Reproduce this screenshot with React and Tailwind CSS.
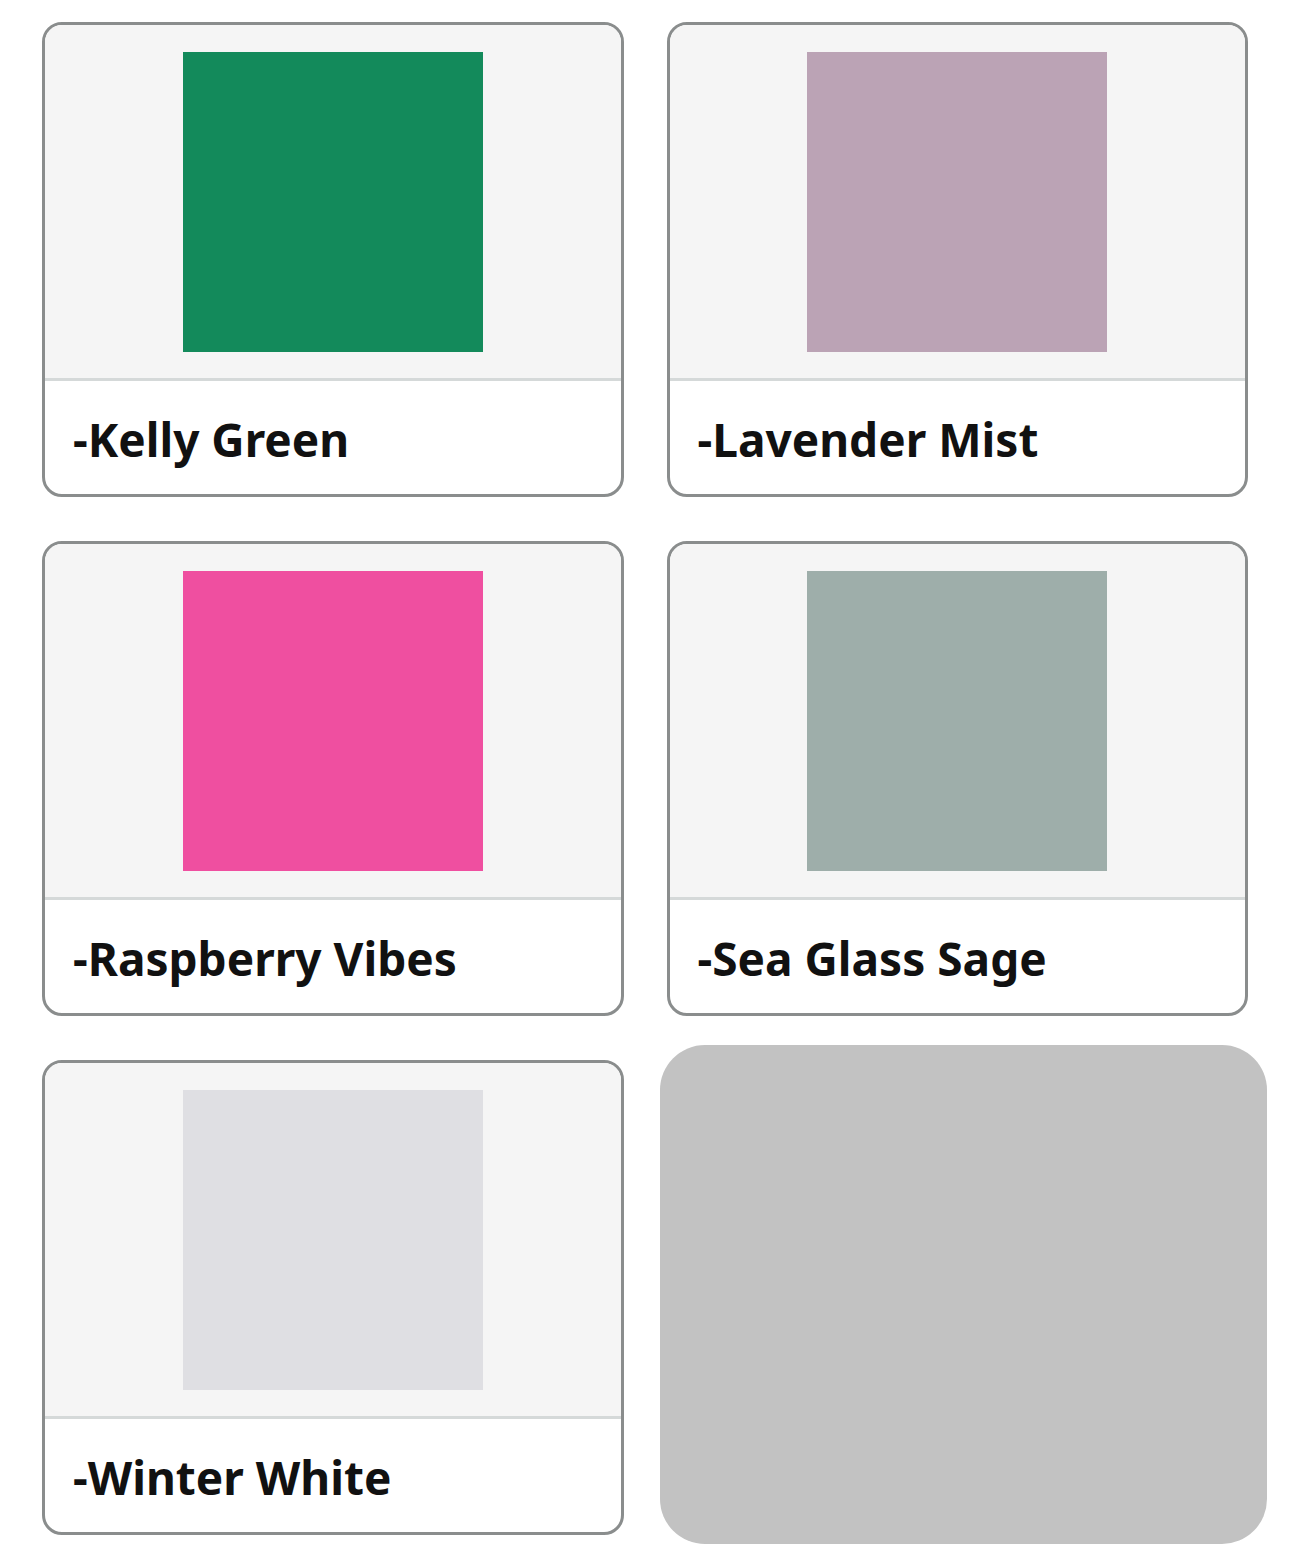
const swatches = [
  { name: '-Kelly Green', color: 'bg-[#138a5b]' },
  { name: '-Lavender Mist', color: 'bg-[#bba3b5]' },
  { name: '-Raspberry Vibes', color: 'bg-[#ef4fa0]' },
  { name: '-Sea Glass Sage', color: 'bg-[#9eaeaa]' },
  { name: '-Winter White', color: 'bg-[#dfdfe3]' },
];

function SwatchCard({ name, color }) {
  return (
    <div className="h-[475px] rounded-[20px] border-[3px] border-[#8a8d8d] overflow-hidden flex flex-col bg-white">
      <div className="h-[353px] bg-[#f5f5f5] flex items-center justify-center">
        <div className={`w-[300px] h-[300px] ${color}`} />
      </div>
      <div className="h-[3px] bg-[#d5d9d9]" />
      <div className="flex-1 flex items-center pl-[28px] pt-[4px]">
        <span className="text-[46px] font-bold text-[#111111]">{name}</span>
      </div>
    </div>
  );
}

export default function App() {
  return (
    <div
      className="w-[1290px] h-[1547px] bg-white pt-[22px] px-[42px]"
      style={{ fontFamily: '"Noto Sans", "Open Sans", sans-serif' }}
    >
      <div className="grid grid-cols-2 gap-x-[43px] gap-y-[44px]">
        {swatches.map(s => (
          <SwatchCard key={s.name} name={s.name} color={s.color} />
        ))}
        <div className="-ml-[7px] -mr-[19px] -mt-[15px] -mb-[9px] rounded-[45px] bg-[#c2c2c2]" />
      </div>
    </div>
  );
}
